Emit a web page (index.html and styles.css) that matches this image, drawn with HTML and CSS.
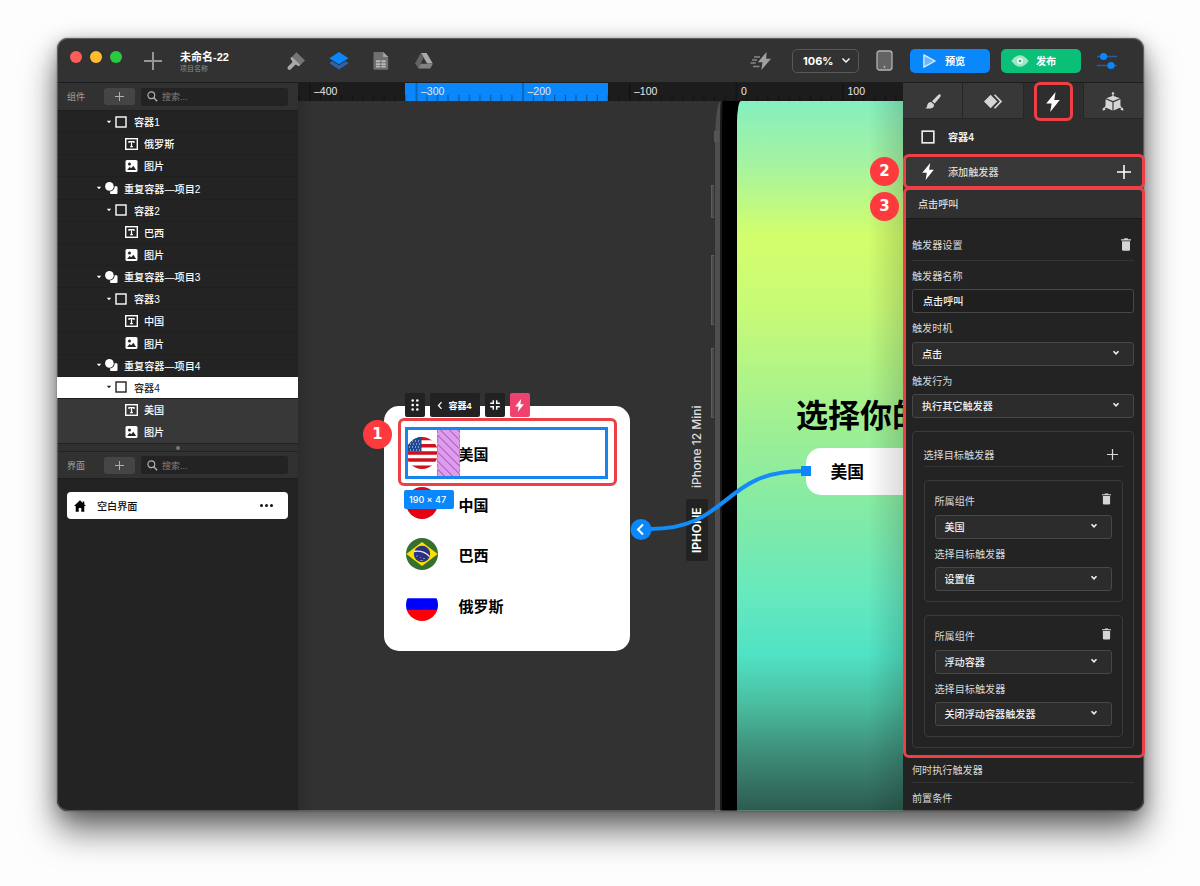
FILE: index.html
```html
<!DOCTYPE html>
<html lang="zh-CN">
<head>
    <meta charset="UTF-8">
    <title>未命名-22</title>
    <link rel="stylesheet" href="styles.css">
</head>
<body>
    <!-- shared icons -->
    <svg class="defs" width="0" height="0">
        <symbol id="i-plus" viewBox="0 0 18 18"><path d="M9 0v18M0 9h18" fill="none" stroke="currentColor" stroke-width="2"/></symbol>
        <symbol id="i-search" viewBox="0 0 12 12"><circle cx="4.7" cy="4.7" r="3.7" fill="none" stroke="currentColor" stroke-width="1.3"/><path d="M7.3 7.3l3.8 3.8" stroke="currentColor" stroke-width="1.6"/></symbol>
        <symbol id="i-caret" viewBox="0 0 6 4"><path d="M.8 .7h4.4L3 3.3z" fill="currentColor"/></symbol>
        <symbol id="i-box" viewBox="0 0 12 12"><rect x="1" y="1" width="10" height="10" fill="none" stroke="currentColor" stroke-width="1.4"/></symbol>
        <symbol id="i-text" viewBox="0 0 13 12"><rect x=".7" y=".7" width="11.6" height="10.6" fill="none" stroke="currentColor" stroke-width="1.4"/><path d="M4 5V3.700h5V5M6.500 3.700v5M5.100 8.600h2.800" fill="none" stroke="currentColor" stroke-width="1.300"/></symbol>
        <symbol id="i-image" viewBox="0 0 12 12"><rect width="12" height="12" rx="1.5" fill="currentColor"/><circle cx="4" cy="4" r="1.5" fill="#232323"/><path d="M1.7 10l2.4-3 1.7 1.2 2-2.4 2.8 4.2z" fill="#232323"/></symbol>
        <symbol id="i-repeat" viewBox="0 0 13 12"><path d="M9.6 4.2h1.9a1 1 0 0 1 1 1V11a1 1 0 0 1-1 1H6a1 1 0 0 1-1-1V9.6a5 5 0 0 0 4.6-5.4z" fill="currentColor"/><circle cx="4.4" cy="4.4" r="4.3" fill="currentColor"/></symbol>
        <symbol id="i-bolt" viewBox="0 0 14 20"><path d="M9.6 0L.2 11.6h5.4L4.2 20 13.8 8H8.3z" fill="currentColor"/></symbol>
        <symbol id="i-down" viewBox="0 0 8 6"><path d="M1.5 1.3L4 3.800l2.500-2.500" fill="none" stroke="currentColor" stroke-width="1.600"/></symbol>
        <symbol id="i-trash" viewBox="0 0 10 13"><path d="M0 1.2h2.8L3.4 .3h3.2l.6 .9H10v1.2H0zM1 3.2h8v8.3a1.2 1.2 0 0 1-1.2 1.2H2.2A1.2 1.2 0 0 1 1 11.500z" fill="currentColor"/></symbol>
    </svg>

    <div class="window">
        <header class="topbar">
            <div class="lights"><i class="red"></i><i class="yellow"></i><i class="green"></i></div>
            <svg class="add"><use href="#i-plus"/></svg>
            <div class="project">
                <b>未命名-22</b>
                <small>项目名称</small>
            </div>
            <nav class="modes">
                <svg viewBox="0 0 20 20"><path d="M10.500 1.300L19 9.500l-4.500 4.300L6 5.700z" fill="#757575"/><path d="M6 5.700l8.500 8.100-1.700 1.400-3.200-1.800-4.700 4.800a2 2 0 0 1-2.900-2.800L6.600 11 4.300 7.300z" fill="#a9a9a9"/></svg>
                <svg viewBox="0 0 20 20"><path d="M3.200 10L.5 12.200 10 18.500l9.500-6.300L16.800 10 10 14.300z" fill="#2c62ae"/><path d="M10 1l9.500 6.200L10 13.300.5 7.200z" fill="#0a88fb"/></svg>
                <svg viewBox="0 0 20 20"><path d="M3.500 1h8.700l5 5v11.700a1 1 0 0 1-1 1H3.500a1 1 0 0 1-1-1V2a1 1 0 0 1 1-1z" fill="#707070"/><path d="M12.200 1v5h5z" fill="#a5a5a5"/><path d="M5 9.200h4.300v2H5zM10.400 9.200h4.300v2h-4.300zM5 12.200h4.300v2H5zM10.400 12.200h4.300v2h-4.300zM5 15.100h4.300v1.500H5zM10.400 15.100h4.300v1.500h-4.300z" fill="#bbb"/></svg>
                <svg viewBox="0 0 20 20"><path d="M6.600 2.200L9.400 7l-5 10.300L1 12.500z" fill="#626262"/><path d="M7 2h5.600l6.200 10.500h-5.700z" fill="#aaa"/><path d="M6.700 12.800h12.200l-2.700 4.700H4.200z" fill="#808080"/></svg>
            </nav>
            <div class="actions">
                <svg class="fast" viewBox="0 0 22 20"><path d="M16.500 1L7.800 11.300h4.700L11.300 19 21 7.800h-4.800z" fill="#a0a0a0"/><path d="M4 6h6M2 9h5M.5 12h5.300M3 15.500h6.500" stroke="#888" stroke-width="1.300"/></svg>
                <div class="zoom">106%<svg viewBox="0 0 8 6"><path d="M1 1.200l3 3 3-3" fill="none" stroke="#fff" stroke-width="1.200"/></svg></div>
                <svg class="device" viewBox="0 0 17 21"><rect x="1" y="1" width="15" height="19" rx="2.500" fill="#636363" stroke="#b2b2b2" stroke-width="1.300"/><circle cx="8.500" cy="16.800" r=".9" fill="#ccc"/></svg>
                <button class="btn preview"><svg viewBox="0 0 16 16"><path d="M2 1.500L14 8 2 14.500z" fill="#6db7fc" stroke="#d9edff" stroke-width="1.400" stroke-linejoin="round"/></svg>预览</button>
                <button class="btn publish"><svg viewBox="0 0 18 12"><path d="M.3 6Q9-5.500 17.700 6 9 17.500 .3 6z" fill="#a1e5c7"/><circle cx="9" cy="6" r="3" fill="#e9fff5"/><circle cx="9" cy="6" r="1.300" fill="#0cbf75"/></svg>发布</button>
                <svg class="sliders" viewBox="0 0 21 18"><path d="M0 4.500h20M0 13.500h20" stroke="#235f9d" stroke-width="1.600"/><circle cx="6.500" cy="4.500" r="3.600" fill="#0a88fb"/><circle cx="14" cy="13.500" r="3.600" fill="#0a88fb"/></svg>
            </div>
        </header>

        <div class="workspace">
            <aside class="sidebar">
                <div class="panel-head">
                    <span>组件</span>
                    <button><svg><use href="#i-plus"/></svg></button>
                    <label><svg><use href="#i-search"/></svg>搜索...</label>
                </div>
                <ul class="tree">
                    <li class="box"><svg class="caret"><use href="#i-caret"/></svg><svg class="ico"><use href="#i-box"/></svg>容器1</li>
                    <li class="leaf"><svg class="ico"><use href="#i-text"/></svg>俄罗斯</li>
                    <li class="leaf"><svg class="ico"><use href="#i-image"/></svg>图片</li>
                    <li class="repeat"><svg class="caret"><use href="#i-caret"/></svg><svg class="ico"><use href="#i-repeat"/></svg>重复容器—项目2</li>
                    <li class="box"><svg class="caret"><use href="#i-caret"/></svg><svg class="ico"><use href="#i-box"/></svg>容器2</li>
                    <li class="leaf"><svg class="ico"><use href="#i-text"/></svg>巴西</li>
                    <li class="leaf"><svg class="ico"><use href="#i-image"/></svg>图片</li>
                    <li class="repeat"><svg class="caret"><use href="#i-caret"/></svg><svg class="ico"><use href="#i-repeat"/></svg>重复容器—项目3</li>
                    <li class="box"><svg class="caret"><use href="#i-caret"/></svg><svg class="ico"><use href="#i-box"/></svg>容器3</li>
                    <li class="leaf"><svg class="ico"><use href="#i-text"/></svg>中国</li>
                    <li class="leaf"><svg class="ico"><use href="#i-image"/></svg>图片</li>
                    <li class="repeat"><svg class="caret"><use href="#i-caret"/></svg><svg class="ico"><use href="#i-repeat"/></svg>重复容器—项目4</li>
                    <li class="box selected"><svg class="caret"><use href="#i-caret"/></svg><svg class="ico"><use href="#i-box"/></svg>容器4</li>
                    <li class="leaf child"><svg class="ico"><use href="#i-text"/></svg>美国</li>
                    <li class="leaf child"><svg class="ico"><use href="#i-image"/></svg>图片</li>
                </ul>
                <div class="grip"><i></i></div>
                <div class="panel-head screens">
                    <span>界面</span>
                    <button><svg><use href="#i-plus"/></svg></button>
                    <label><svg><use href="#i-search"/></svg>搜索...</label>
                </div>
                <div class="screen-item">
                    <svg viewBox="0 0 12 12"><path d="M6 .3L0 6h1.700v5.700h3V8h2.600v3.700h3V6H12l-1.700-1.600V1.500H8.700v1.400z"/></svg>
                    空白界面
                    <span class="dots"><i></i><i></i><i></i></span>
                </div>
            </aside>

            <main class="canvas">
                <div class="phone">
                    <div class="phone-screen"></div>
                </div>
                <i class="side-key mute"></i>
                <i class="side-key vol-up"></i>
                <i class="side-key vol-down"></i>
                <i class="antenna"></i>
                <div class="phone-title">选择你的</div>
                <div class="phone-field">美国</div>
                <div class="canvas-shade"></div>
                <div class="device-name">iPhone 12 Mini</div>
                <div class="device-tag">IPHONE</div>

                <svg class="ruler" viewBox="298 83 605 18">
                    <defs>
                        <pattern id="ticks" x="309" y="83" width="106.600" height="18" patternUnits="userSpaceOnUse">
                            <path d="M.9 0v18" stroke="#000" stroke-opacity=".5"/>
                            <path d="M11.200 12v6M21.800 12v6M32.500 12v6M43.200 12v6M53.800 12v6M64.500 12v6M75.100 12v6M85.800 12v6M96.400 12v6" stroke="#000" stroke-opacity=".4"/>
                        </pattern>
                    </defs>
                    <rect x="298" y="83" width="605" height="18" fill="#1c1c1c"/>
                    <rect x="405" y="83" width="203" height="18" fill="#0a88fb"/>
                    <rect x="298" y="83" width="605" height="18" fill="url(#ticks)"/>
                    <g class="marks">
                        <text x="314" y="95">–400</text>
                        <text x="421" y="95">–300</text>
                        <text x="527.500" y="95">–200</text>
                        <text x="634" y="95">–100</text>
                        <text x="741" y="95">0</text>
                        <text x="847.500" y="95">100</text>
                    </g>
                </svg>

                <div class="float-card">
                    <div class="country">
                        <svg class="flag" viewBox="0 0 32 32">
                            <clipPath id="round"><circle cx="16" cy="16" r="16"/></clipPath>
                            <g clip-path="url(#round)">
                                <path d="M0 0h32v32H0z" fill="#fff"/>
                                <path d="M0 1.500h32M0 8.800h32M0 16h32M0 23h32M0 30.200h32" stroke="#d0111b" stroke-width="3.500"/>
                                <path d="M0 0h15.500v14.500H0z" fill="#1f4a93"/>
                                <path d="M3 4h12M1 7h14M3 10h12M1 13h14" stroke="#dfe8f5" stroke-width="1" stroke-dasharray="1 2"/>
                            </g>
                        </svg>
                        <span>美国</span>
                    </div>
                    <div class="country">
                        <svg class="flag" viewBox="0 0 32 32"><circle cx="16" cy="16" r="16" fill="#e50012"/></svg>
                        <span>中国</span>
                    </div>
                    <div class="country">
                        <svg class="flag" viewBox="0 0 32 32">
                            <circle cx="16" cy="16" r="16" fill="#35702f"/>
                            <path d="M.3 16L16 4l15.700 12L16 28z" fill="#ffdf00"/>
                            <circle cx="16" cy="16" r="8.200" fill="#2b3180"/>
                            <path d="M8 13.500q9-1.500 15.500 5" fill="none" stroke="#e8edf5" stroke-width="1.300"/>
                            <path d="M10 18h2M14 19.500h1M17 20.500h2M14 22.500h3" stroke="#9ba0cc" stroke-width=".8"/>
                        </svg>
                        <span>巴西</span>
                    </div>
                    <div class="country">
                        <svg class="flag" viewBox="0 0 32 32">
                            <g clip-path="url(#round)"><path d="M0 9.200h32v12H0z" fill="#00f"/><path d="M0 20.800h32V32H0z" fill="#fb0007"/></g>
                        </svg>
                        <span>俄罗斯</span>
                    </div>
                </div>

                <div class="gap-hatch"></div>
                <div class="selection"></div>
                <div class="size-tag">190 × 47</div>
                <div class="mini-tools">
                    <span><svg viewBox="0 0 20 24"><g fill="#fff"><circle cx="7.700" cy="7.500" r="1.300"/><circle cx="12.300" cy="7.500" r="1.300"/><circle cx="7.700" cy="12" r="1.300"/><circle cx="12.300" cy="12" r="1.300"/><circle cx="7.700" cy="16.500" r="1.300"/><circle cx="12.300" cy="16.500" r="1.300"/></g></svg></span>
                    <span class="crumb"><svg class="back" viewBox="0 0 6 10"><path d="M4.700 1.200L1.300 5l3.400 3.800" fill="none" stroke="#fff" stroke-width="1.400"/></svg>容器4</span>
                    <span><svg viewBox="0 0 20 24"><path d="M8.300 7.200v3.100H5.200M11.700 7.200v3.100h3.100M8.300 16.800v-3.100H5.200M11.700 16.800v-3.100h3.100" fill="none" stroke="#fff" stroke-width="1.500"/></svg></span>
                    <span class="hot"><svg class="bolt"><use href="#i-bolt"/></svg></span>
                </div>

                <svg class="link" viewBox="298 83 605 728">
                    <path d="M650 529C730 529 722 471 803 471" fill="none" stroke="#128cfa" stroke-width="4"/>
                    <rect x="801" y="466" width="10" height="10" fill="#0a88fb"/>
                    <circle cx="641" cy="529.500" r="10.500" fill="#0a88fb"/>
                    <path d="M643 524.500l-5 5 5 5" fill="none" stroke="#fff" stroke-width="2"/>
                </svg>
            </main>

            <aside class="inspector">
                <nav class="tabs">
                    <span><svg viewBox="0 0 20 20"><path d="M17.600 2.600c.9 .8 .7 1.700 0 2.700L11.800 12.200 8.900 9.700l6.500-6.500c.8-.8 1.500-1.200 2.200-.6z"/><path d="M8 10.600l3 2.500c.4 3.300-2.500 5.200-9.300 3.900 2-.7 1.900-1.700 2.300-3.400.5-2 2.300-3.200 4-3z"/></svg></span>
                    <span><svg viewBox="0 0 20 20"><path d="M7.500 2.800l7 7.200-7 7.200L.5 10z"/><path d="M11 3.500l1.200-1.200L19.700 10l-7.500 7.700L11 16.500l6.200-6.500z"/></svg></span>
                    <span class="active"><svg class="bolt"><use href="#i-bolt"/></svg></span>
                    <span><svg class="cube" viewBox="0 0 22 22"><path d="M10.300 5.200L3.800 7.500 11 10.600l7.200-3.100-6.500-2.300zM3.200 8.700l7.200 3.100V20.500L3.200 17.200zM18.800 8.700l-7.200 3.100v8.700l7.200-3.300z"/><path d="M11 7.500V2.500M4 15.500L1.500 19M18 15.500l2.500 3.500" fill="none" stroke="#d5d5d5" stroke-width="1.300"/><path d="M11 .6l1.700 2.600H9.300zM.1 20.800l.4-3.400 3 2zM21.900 20.800l-.4-3.400-3 2z"/></svg></span>
                </nav>
                <div class="node-name"><svg><use href="#i-box"/></svg>容器4</div>
                <div class="add-trigger">
                    <svg class="bolt"><use href="#i-bolt"/></svg>添加触发器
                    <svg class="plus"><use href="#i-plus"/></svg>
                </div>
                <div class="trigger-head">点击呼叫</div>
                <div class="trigger-body">
                    <div class="line-head">触发器设置<svg class="trash"><use href="#i-trash"/></svg></div>
                    <div class="caption">触发器名称</div>
                    <div class="field input">点击呼叫</div>
                    <div class="caption">触发时机</div>
                    <div class="field">点击<svg><use href="#i-down"/></svg></div>
                    <div class="caption">触发行为</div>
                    <div class="field">执行其它触发器<svg><use href="#i-down"/></svg></div>

                    <section class="targets">
                        <div class="target-head">选择目标触发器<svg><use href="#i-plus"/></svg></div>
                        <div class="target">
                            <div class="caption first">所属组件<svg class="trash"><use href="#i-trash"/></svg></div>
                            <div class="field">美国<svg><use href="#i-down"/></svg></div>
                            <div class="caption">选择目标触发器</div>
                            <div class="field">设置值<svg><use href="#i-down"/></svg></div>
                        </div>
                        <div class="target">
                            <div class="caption first">所属组件<svg class="trash"><use href="#i-trash"/></svg></div>
                            <div class="field">浮动容器<svg><use href="#i-down"/></svg></div>
                            <div class="caption">选择目标触发器</div>
                            <div class="field">关闭浮动容器触发器<svg><use href="#i-down"/></svg></div>
                        </div>
                    </section>
                    <div class="foot-row">何时执行触发器</div>
                    <div class="foot-row last">前置条件</div>
                </div>
            </aside>
        </div>
    </div>

    <!-- callouts -->
    <div class="callout c-row"></div>
    <div class="callout c-tab"></div>
    <div class="callout c-add"></div>
    <div class="callout c-body"></div>
    <div class="badge b1">1</div>
    <div class="badge b2">2</div>
    <div class="badge b3">3</div>
</body>
</html>
```
FILE: styles.css
```css
* {
    box-sizing: border-box;
}
body {
    margin: 0;
    width: 1200px;
    height: 886px;
    padding: 38px 0 0 57px;
    position: relative;
    overflow: hidden;
    background: #fdfdfd;
    font-family: "Liberation Sans", "Noto Sans CJK SC", sans-serif;
    font-size: 10.150px;
    color: #fff;
}
svg {
    display: block;
    flex: none;
}
.defs {
    position: absolute;
}
button {
    border: 0;
    padding: 0;
    font: inherit;
    color: inherit;
}
.window {
    position: relative;
    width: 1087px;
    height: 773px;
    border-radius: 11px;
    background: #323232;
    box-shadow: 0 0 2px rgba(0, 0, 0, .4), 0 20px 34px rgba(0, 0, 0, .55), 0 4px 18px rgba(0, 0, 0, .25);
    display: flex;
    flex-direction: column;
    overflow: hidden;
}
.window::after {
    content: "";
    position: absolute;
    inset: 0;
    border-radius: 11px;
    box-shadow: inset 0 0 0 1px rgba(255, 255, 255, .22);
}

/* top bar */
.topbar {
    height: 45px;
    flex: none;
    display: flex;
    align-items: center;
    padding: 1px 26px 0 13px;
    border-bottom: 1px solid #1d1d1d;
}
.lights {
    display: flex;
    gap: 8px;
    margin-bottom: 7px;
}
.lights i {
    width: 12px;
    height: 12px;
    border-radius: 50%;
}
.red { background: #fe5e57; }
.yellow { background: #febc2e; }
.green { background: #29c940; }
.add {
    width: 18px;
    height: 18px;
    margin-left: 22px;
    color: #959595;
}
.project {
    margin: 2px 0 0 18px;
    width: 106px;
    display: flex;
    flex-direction: column;
}
.project b {
    font-size: 11px;
    line-height: 13px;
}
.project small {
    font-size: 7px;
    line-height: 9px;
    color: #8d8d8d;
}
.modes {
    display: flex;
    gap: 22.700px;
}
.modes svg {
    width: 20px;
    height: 20px;
}
.actions {
    margin-left: auto;
    display: flex;
    align-items: center;
}
.fast {
    width: 22px;
    height: 20px;
    margin-right: 20px;
}
.zoom {
    width: 67px;
    height: 24px;
    border: 1px solid #585858;
    border-radius: 5px;
    display: flex;
    align-items: center;
    padding-left: 10px;
    font: 700 11px Inter, sans-serif;
}
.zoom svg {
    width: 10px;
    height: 7px;
    margin-left: 8px;
}
.device {
    width: 17px;
    height: 21px;
    margin: 0 17px 0 17px;
}
.btn {
    width: 80px;
    height: 24px;
    border-radius: 5px;
    display: flex;
    align-items: center;
    font-weight: 700;
}
.btn svg {
    flex: none;
}
.preview {
    background: #0a88fb;
    padding-left: 12px;
}
.preview svg {
    width: 15px;
    height: 16px;
    margin-right: 8px;
}
.publish {
    background: #0abf78;
    margin-left: 11px;
    padding-left: 10px;
}
.publish svg {
    width: 18px;
    height: 12px;
    margin-right: 7px;
}
.sliders {
    width: 21px;
    height: 18px;
    margin-left: 16px;
}

.workspace {
    flex: 1;
    display: flex;
    min-height: 0;
}

/* left side */
.sidebar {
    width: 241px;
    flex: none;
    background: #232323;
}
.panel-head {
    height: 28px;
    background: #313131;
    border-bottom: 1px solid #1f1f1f;
    display: flex;
    align-items: center;
    padding: 0 10px;
    font-size: 9px;
    color: #a2a2a2;
}
.panel-head span {
    width: 37px;
}
.panel-head button {
    width: 31px;
    height: 17px;
    border-radius: 3px;
    background: #454545;
    display: flex;
    align-items: center;
    justify-content: center;
    color: #b0b0b0;
}
.panel-head button svg {
    width: 9px;
    height: 9px;
}
.panel-head label {
    margin-left: 6px;
    width: 147px;
    height: 18px;
    border-radius: 3px;
    background: #232323;
    display: flex;
    align-items: center;
    padding-left: 6px;
    color: #808080;
}
.panel-head label svg {
    width: 11px;
    height: 11px;
    margin-right: 4px;
    color: #b0b0b0;
}
.tree {
    list-style: none;
    margin: 0;
    padding: 0;
}
.tree li {
    height: 22.170px;
    padding-bottom: 1px;
    display: flex;
    align-items: center;
    font-weight: 500;
    box-shadow: inset 0 -1px #1f1f1f;
}
.tree .caret {
    width: 6px;
    height: 4px;
    margin-right: 3px;
}
.ico {
    width: 12px;
    height: 12px;
}
.box { padding-left: 49px; }
.box .ico { margin-right: 7px; }
.repeat { padding-left: 39px; }
.repeat .ico { width: 13px; margin-right: 6px; }
.leaf { padding-left: 68px; }
.leaf .ico { width: 13px; margin-right: 6px; }
.tree .selected {
    background: #fff;
    color: #222;
}
.tree .child {
    background: #383838;
    box-shadow: none;
}
.grip {
    height: 9px;
    background: #303030;
    border-top: 1px solid #222;
    border-bottom: 1px solid #222;
    display: flex;
    align-items: center;
    justify-content: center;
}
.grip i {
    width: 4px;
    height: 4px;
    border-radius: 50%;
    background: #777;
}
.screens {
    height: 27px;
}
.screen-item {
    margin: 13px 10px 0;
    height: 27px;
    border-radius: 4px;
    background: #fff;
    color: #111;
    display: flex;
    align-items: center;
    padding: 0 15px 0 7px;
    font-weight: 500;
}
.screen-item svg {
    width: 12px;
    height: 12px;
    margin-right: 11px;
}
.dots {
    margin-left: auto;
    display: flex;
    gap: 2px;
}
.dots i {
    width: 3px;
    height: 3px;
    border-radius: 50%;
    background: #111;
}

/* canvas, items are placed freely */
.canvas {
    position: relative;
    width: 605px;
    flex: none;
    overflow: hidden;
    background: #323232;
}
.canvas > * {
    position: absolute;
}
.ruler {
    left: 0;
    top: 0;
    width: 605px;
    height: 18px;
}
.marks text {
    font-family: "Liberation Sans", sans-serif;
    font-size: 10.500px;
    fill: #e8e8e8;
}
.phone {
    left: 417px;
    top: 18px;
    width: 188px;
    height: 710px;
    background: #000;
    border-left: 5px solid #4e4e4e;
    box-shadow: inset 2px 0 #1b1b1b;
    border-top-left-radius: 6px 40px;
}
.phone-screen {
    margin-left: 17px;
    height: 710px;
    border-top-left-radius: 4px 22px;
    background: linear-gradient(#85efc0 0, #a6f39f 9%, #d3fe6c 19%, #c8fb76 29%, #9eef94 46%, #7eeaa9 60%, #68e9bd 69%, #50e2c4 78%, #4abd9f 85%, #3e8c78 92%, #2c5b4f 100%);
}
.side-key {
    width: 3px;
    border: 1px solid #5d5d5d;
    border-right: 0;
    background: #4a4a4a;
    left: 413px;
}
.mute { top: 102px; height: 33px; }
.vol-up { top: 172px; height: 70px; }
.vol-down { top: 265px; height: 70px; }
.antenna {
    left: 416px;
    top: 48px;
    width: 5px;
    height: 11px;
    background: #555;
}
.phone-title {
    left: 498px;
    top: 310px;
    font-size: 32px;
    line-height: 46px;
    font-weight: 700;
    color: #000;
    white-space: nowrap;
}
.phone-field {
    left: 508px;
    top: 365px;
    width: 200px;
    height: 47px;
    border-radius: 15px;
    background: #fff;
    color: #000;
    font-size: 16.800px;
    font-weight: 700;
    line-height: 50px;
    padding-left: 24.500px;
}
.canvas-shade {
    inset: 0;
    background: linear-gradient(to right, rgba(0, 0, 0, .12), transparent 15px, transparent 570px, rgba(0, 0, 0, .14));
}
.device-name,
.device-tag {
    writing-mode: vertical-rl;
    transform: rotate(180deg);
    font-family: Inter, sans-serif;
    font-size: 12px;
    line-height: 22px;
    text-align: center;
    white-space: nowrap;
}
.device-name {
    left: 388px;
    top: 320px;
    height: 88px;
    font-weight: 500;
    color: #ddd;
}
.device-tag {
    left: 388px;
    top: 416px;
    height: 62px;
    background: #222;
    border-radius: 2px;
    font-size: 12px;
    font-weight: 600;
}
.float-card {
    left: 86px;
    top: 323px;
    width: 246px;
    height: 245px;
    border-radius: 15px;
    background: #fff;
    padding: 23px 22px 0 21.500px;
    display: flex;
    flex-direction: column;
    gap: 3.700px;
    color: #000;
}
.country {
    height: 47px;
    display: flex;
    align-items: center;
    font-size: 15px;
    font-weight: 700;
}
.flag {
    width: 32px;
    height: 32px;
    margin-right: 21px;
}
.country span {
    padding-top: 2px;
}
.gap-hatch {
    left: 139px;
    top: 347px;
    width: 23px;
    height: 47px;
    background: repeating-linear-gradient(45deg, #df9bec 0 4.500px, #b873cd 4.500px 6px);
    border: 1px dashed #b873cd;
    border-width: 0 1px;
}
.selection {
    left: 107px;
    top: 344px;
    width: 203px;
    height: 52px;
    border: 3px solid #1984ee;
}
.size-tag {
    left: 106px;
    top: 407px;
    width: 50px;
    height: 19px;
    border-radius: 2px;
    background: #0a88fb;
    font: 500 9px/19px Inter, sans-serif;
    padding-left: 5px;
    white-space: nowrap;
}
.mini-tools {
    left: 106.500px;
    top: 310px;
    display: flex;
    gap: 5px;
}
.mini-tools span {
    width: 20px;
    height: 24px;
    border-radius: 2px;
    background: #222;
    display: flex;
    align-items: center;
    justify-content: center;
    font-size: 9px;
    font-weight: 700;
}
.mini-tools span > svg {
    width: 20px;
    height: 24px;
}
.mini-tools .crumb {
    width: 50px;
    gap: 5px;
}
.mini-tools .crumb .back {
    width: 6px;
    height: 9px;
}
.mini-tools .hot {
    background: #f0426f;
}
.mini-tools .hot .bolt {
    width: 9px;
    height: 13px;
}
.link {
    left: 0;
    top: 0;
    width: 605px;
    height: 728px;
}

/* right side */
.inspector {
    flex: 1;
    background: #232323;
    color: #d8d8d8;
}
.tabs {
    height: 36px;
    display: flex;
    background: #2d2d2d;
}
.tabs span {
    flex: 1;
    background: #383838;
    border-right: 1px solid #262626;
    border-bottom: 1px solid #262626;
    display: flex;
    align-items: center;
    justify-content: center;
    padding-top: 2px;
}
.tabs svg {
    width: 20px;
    height: 19px;
    fill: #d5d5d5;
}
.tabs .active {
    background: #2e2e2e;
    border-bottom-color: #2e2e2e;
    color: #fff;
}
.tabs .bolt {
    width: 14px;
    height: 20px;
}
.tabs .cube {
    width: 22px;
    height: 21px;
}
.node-name {
    height: 36px;
    background: #2e2e2e;
    display: flex;
    align-items: center;
    padding: 0 0 1px 18px;
    font-weight: 700;
    color: #eee;
}
.node-name svg {
    width: 14px;
    height: 14px;
    margin-right: 13px;
}
.add-trigger {
    height: 33px;
    background: #383838;
    display: flex;
    align-items: center;
    padding: 0 13px 0 19px;
    font-weight: 500;
}
.add-trigger .bolt {
    width: 12px;
    height: 17px;
    margin-right: 14px;
    color: #fff;
}
.add-trigger .plus {
    width: 14px;
    height: 14px;
    margin-left: auto;
    color: #fff;
}
.trigger-head {
    height: 31px;
    line-height: 34px;
    background: #303030;
    border-bottom: 1px solid #1c1c1c;
    padding-left: 15px;
    font-weight: 500;
}
.trigger-body {
    padding: 11px 10px 0 9px;
}
.line-head {
    height: 31px;
    padding-bottom: 2px;
    border-bottom: 1px solid #343434;
    display: flex;
    align-items: center;
    justify-content: space-between;
}
.trash {
    width: 10px;
    height: 13px;
    color: #d5d5d5;
}
.line-head .trash {
    margin-right: 3px;
}
.caption {
    height: 28.300px;
    line-height: 31px;
}
.field {
    height: 24px;
    border: 1px solid #484848;
    border-radius: 3px;
    background: #2c2c2c;
    color: #f0f0f0;
    font-weight: 500;
    display: flex;
    align-items: center;
    justify-content: space-between;
    padding: 0 13px 1px 9px;
}
.field svg {
    width: 8px;
    height: 6px;
}
.field.input {
    background: #1f1f1f;
    padding-left: 10px;
}
.targets {
    margin-top: 13.500px;
    height: 317px;
    border: 1px solid #3a3a3a;
    border-radius: 4px;
    padding: 10px 10px 0 10.500px;
}
.target-head {
    height: 25px;
    border-bottom: 1px solid #343434;
    display: flex;
    align-items: center;
    justify-content: space-between;
    padding-right: 5px;
}
.target-head svg {
    width: 11px;
    height: 11px;
}
.target {
    height: 122px;
    margin-top: 13px;
    border: 1px solid #3a3a3a;
    border-radius: 4px;
    padding: 5px 10px 0;
}
.caption.first {
    display: flex;
    justify-content: space-between;
}
.caption .trash {
    margin: 7px 1px 0 0;
    height: 12px;
    width: 9px;
}
.foot-row {
    height: 35px;
    padding-top: 9px;
    line-height: 27px;
    border-bottom: 1px solid #343434;
}
.foot-row.last {
    padding-top: 2px;
    height: 26px;
    border: 0;
}

/* callouts over the window */
.callout {
    position: absolute;
    border: 3px solid #ee3f45;
    border-radius: 6px;
}
.c-row { left: 398px; top: 418px; width: 219px; height: 68px; }
.c-tab { left: 1034px; top: 82px; width: 39px; height: 39px; }
.c-add { left: 903px; top: 154px; width: 242px; height: 35px; }
.c-body { left: 903px; top: 187px; width: 242px; height: 571px; }
.badge {
    position: absolute;
    width: 29px;
    height: 29px;
    border-radius: 50%;
    background: #ff3a3e;
    font: 700 15px/29px "DejaVu Sans", sans-serif;
    text-align: center;
}
.b1 { left: 363px; top: 420px; }
.b2 { left: 870px; top: 157px; }
.b3 { left: 870px; top: 192px; }
```
